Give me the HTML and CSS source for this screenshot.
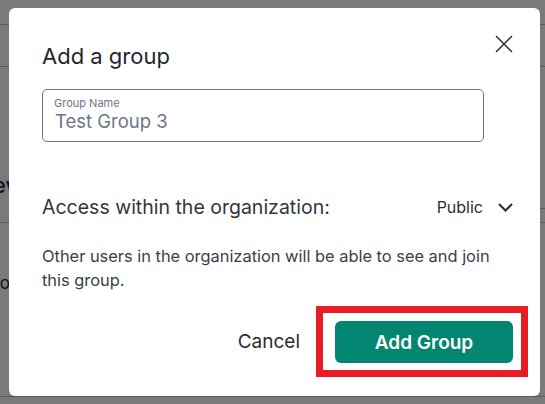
FILE: index.html
```html
<!doctype html>
<html lang="en">
    <head>
        <meta charset="UTF-8" />
        <meta name="viewport" content="width=device-width, initial-scale=1.0" />
        <title>Groups</title>
        <link rel="stylesheet" href="styles.css">
    </head>
    <body>
        <div class="page">
            <div class="page-top"></div>
            <div class="page-tabs"></div>
            <div class="page-section">
                <h3 class="section-title">Overview</h3>
                <div class="side-rule"></div>
            </div>
            <div class="page-row">
                <span class="row-text">Posts</span>
            </div>
            <div class="page-row last">
                <span class="row-date">New Date</span>
            </div>
        </div>

        <div class="overlay">
            <div class="modal" role="dialog" aria-labelledby="modal-title">
                <div class="modal-head">
                    <h2 id="modal-title">Add a group</h2>
                    <button class="close-btn" aria-label="Close">
                        <svg width="18" height="18" viewBox="0 0 18 18">
                            <path d="M1 1L17 17M17 1L1 17" />
                        </svg>
                    </button>
                </div>

                <label class="field">
                    <span class="field-label">Group Name</span>
                    <input class="field-input" type="text" value="Test Group 3" />
                </label>

                <div class="access">
                    <span class="access-label">Access within the organization:</span>
                    <button class="access-select">
                        Public
                        <svg width="15" height="9" viewBox="0 0 15 9">
                            <path d="M1 1L7.5 7.5L14 1" />
                        </svg>
                    </button>
                </div>

                <p class="desc">
                    Other users in the organization will be able to see and join
                    this group.
                </p>

                <div class="actions">
                    <button class="cancel-btn">Cancel</button>
                    <div class="highlight">
                        <button class="add-btn">Add Group</button>
                    </div>
                </div>
            </div>
        </div>
    </body>
</html>
```

FILE: styles.css
```css
html,
body {
    height: 100%;
}
body {
    margin: 0;
    overflow: hidden;
    font-family: Inter, "Noto Sans", sans-serif;
    background-color: #fff;
}

/* page behind the dialog */
.page {
    height: 100%;
    overflow: hidden;
    color: #1c2a4a;
}
.page-top {
    height: 24px;
    border-bottom: 1px solid #bcbcbc;
}
.page-tabs {
    height: 41px;
    border-bottom: 1px solid #bcbcbc;
}
.page-section {
    height: 155px;
    border-bottom: 1px solid #bcbcbc;
    display: flex;
    align-items: flex-end;
    justify-content: space-between;
}
.section-title {
    margin: 0 0 24px -76px;
    font-size: 22px;
    font-weight: 500;
}
.side-rule {
    width: 6px;
    margin-bottom: 13px;
    border-bottom: 1px solid #bcbcbc;
}
.page-row {
    height: 123px;
    border-bottom: 1px solid #bcbcbc;
}
.page-row.last {
    height: 57px;
    border-bottom: none;
}
.row-text {
    display: block;
    margin: 50px 0 0 -11px;
    font-size: 17px;
}
.row-date {
    display: block;
    margin: 42px 0 0 -14px;
    font-size: 20px;
}

/* dialog */
.overlay {
    position: fixed;
    inset: 0;
    background-color: rgba(0, 0, 0, 0.52);
    display: flex;
    align-items: flex-start;
    padding: 8px 5px 0 9px;
}
.modal {
    width: 531px;
    height: 388px;
    box-sizing: border-box;
    background: #fff;
    border-radius: 6px;
    padding: 34px 27px 0 33px;
    display: flex;
    flex-direction: column;
}
.modal-head {
    display: flex;
    justify-content: space-between;
    align-items: flex-start;
}
.modal-head h2 {
    margin: 0;
    font-size: 22px;
    font-weight: 400;
    line-height: 28px;
    color: #25262d;
}
.close-btn {
    width: 18px;
    height: 18px;
    margin-top: -7px;
    padding: 0;
    border: none;
    background: none;
    cursor: pointer;
}
.close-btn svg {
    display: block;
    fill: none;
    stroke: #2d2f36;
    stroke-width: 1.5;
}

.field {
    display: block;
    width: 442px;
    margin-top: 19px;
    box-sizing: border-box;
    border: 1px solid #6b7785;
    border-radius: 5px;
    padding: 7px 11px 9px;
}
.field-label {
    display: block;
    font-size: 11px;
    line-height: 13px;
    color: #6b7785;
}
.field-input {
    display: block;
    width: 100%;
    height: 22px;
    padding: 0 0 0 1px;
    border: none;
    outline: none;
    font-family: inherit;
    font-size: 18.5px;
    line-height: 22px;
    color: #6b7785;
}

.access {
    margin-top: 53px;
    display: flex;
    justify-content: space-between;
    align-items: center;
    line-height: 24px;
}
.access-label {
    font-size: 19.5px;
    color: #32353c;
}
.access-select {
    display: flex;
    align-items: center;
    gap: 15px;
    padding: 0;
    border: none;
    background: none;
    font-family: inherit;
    font-size: 16px;
    line-height: 24px;
    color: #2a2d33;
    cursor: pointer;
}
.access-select svg {
    display: block;
    fill: none;
    stroke: #2a2d33;
    stroke-width: 2;
}

.desc {
    margin: 25px 0 0;
    font-size: 16.4px;
    line-height: 24px;
    color: #3b3e45;
}

.actions {
    margin: 14px -15px 0 0;
    display: flex;
    justify-content: flex-end;
    align-items: center;
    gap: 16px;
}
.cancel-btn {
    padding: 0;
    border: none;
    background: none;
    font-family: inherit;
    font-size: 19px;
    line-height: 22px;
    color: #2a2b33;
    cursor: pointer;
}
.highlight {
    border: 7px solid #e61d25;
    padding: 8px 8px 7px 12px;
}
.add-btn {
    display: block;
    width: 178px;
    height: 42px;
    border: none;
    border-radius: 6px;
    background-color: #028571;
    color: #fff;
    font-family: inherit;
    font-size: 19px;
    font-weight: 600;
    cursor: pointer;
}
```
